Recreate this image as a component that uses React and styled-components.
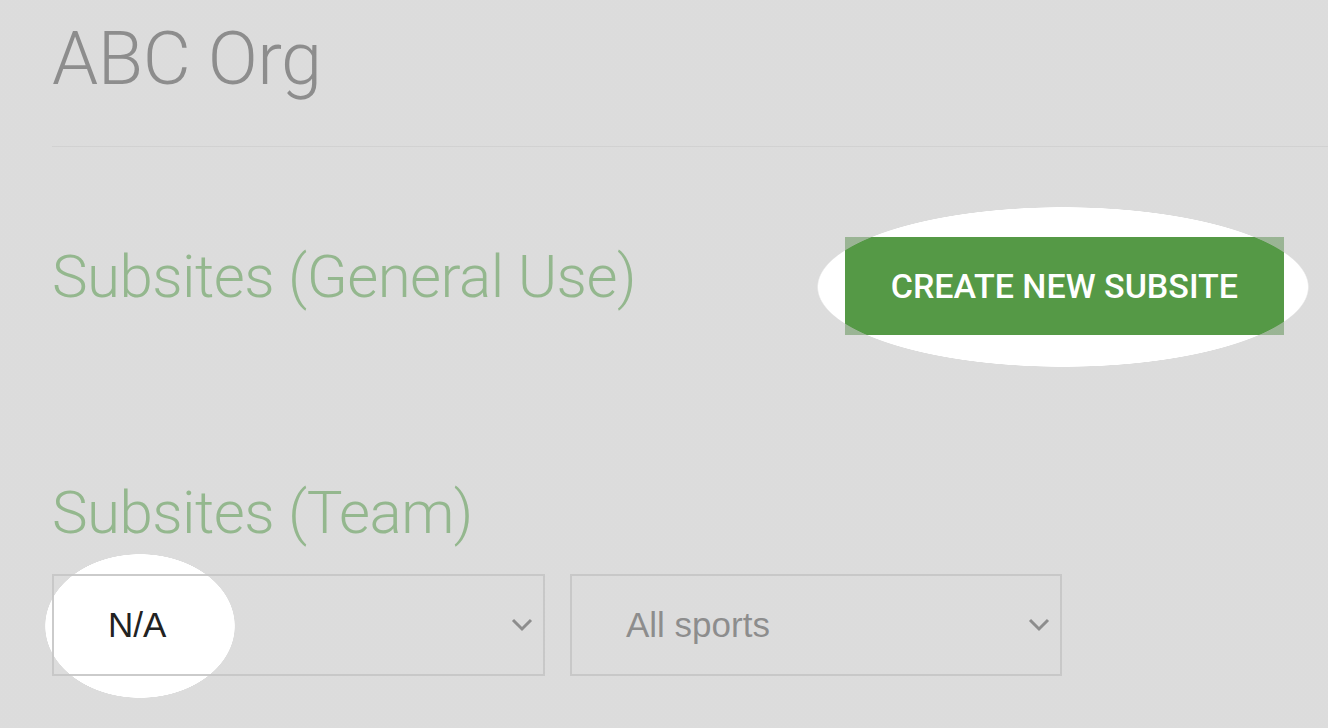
import React from "react";
import styled, { createGlobalStyle } from "styled-components";

const GlobalStyle = createGlobalStyle`
  html, body {
    margin: 0;
    padding: 0;
    background: #fff;
  }
  * {
    box-sizing: border-box;
  }
`;

const Page = styled.div`
  position: relative;
  min-height: 728px;
  overflow: hidden;
  padding-left: 52px;
  padding-top: 22px;
  background: #fff;
  font-family: Roboto, "Liberation Sans", sans-serif;
`;

const OrgTitle = styled.h1`
  margin: 0;
  font-size: 74px;
  line-height: 74px;
  font-weight: 300;
  letter-spacing: -0.5px;
  color: #333;
`;

const Divider = styled.hr`
  margin: 50px 0 0;
  border: 0;
  height: 1px;
  background: #e4e4e4;
`;

const SectionRow = styled.div`
  display: flex;
  justify-content: space-between;
  align-items: flex-start;
  padding-right: 44px;
  margin-top: ${(p) => p.$top}px;
`;

const SectionTitle = styled.h2`
  margin: ${(p) => p.$offset || 0}px 0 0;
  font-size: 60px;
  line-height: 60px;
  font-weight: 300;
  letter-spacing: -0.55px;
  color: #45a036;
`;

const PrimaryButton = styled.button`
  height: 98px;
  padding: 0 46px;
  border: 0;
  border-radius: 0;
  background: #559946;
  color: #fff;
  font-family: Roboto, "Liberation Sans", sans-serif;
  font-size: 34px;
  font-weight: 500;
  text-transform: uppercase;
  cursor: pointer;
`;

const Filters = styled.div`
  display: flex;
  gap: 25px;
  margin-top: 31px;
`;

const SelectBox = styled.div`
  width: ${(p) => p.$width}px;
  height: 102px;
  display: flex;
  align-items: center;
  justify-content: space-between;
  padding: 0 9px 0 54px;
  border: 2px solid #cbcbcb;
  font-family: "Liberation Sans", Arial, sans-serif;
  font-size: 35px;
  color: ${(p) => (p.$muted ? "#333" : "#222")};
`;

const Chevron = styled.svg`
  width: 24px;
  height: 16px;
  flex: none;
`;

const Dimmer = styled.div`
  position: absolute;
  left: 0;
  right: 0;
  top: ${(p) => p.$top}px;
  height: ${(p) => p.$height}px;
  pointer-events: none;
  background: radial-gradient(
    ellipse ${(p) => p.$rx}px ${(p) => p.$ry}px at ${(p) => p.$cx}px ${(p) => p.$cy}px,
    rgba(198, 198, 198, 0) 99.4%,
    rgba(198, 198, 198, 0.61) 100%
  );
`;

function Select({ value, width, muted }) {
  return (
    <SelectBox $width={width} $muted={muted}>
      <span>{value}</span>
      <Chevron viewBox="0 0 24 16">
        <path d="M3 3 L12 12 L21 3" fill="none" stroke="#333" strokeWidth="3" />
      </Chevron>
    </SelectBox>
  );
}

export default function App() {
  return (
    <>
      <GlobalStyle />
      <Page>
        <OrgTitle>ABC Org</OrgTitle>
        <Divider />
        <SectionRow $top={90}>
          <SectionTitle $offset={10}>Subsites (General Use)</SectionTitle>
          <PrimaryButton>Create new subsite</PrimaryButton>
        </SectionRow>
        <SectionTitle $offset={148}>Subsites (Team)</SectionTitle>
        <Filters>
          <Select value="N/A" width={493} />
          <Select value="All sports" width={492} muted />
        </Filters>
        <Dimmer $top={0} $height={460} $rx={246} $ry={80} $cx={1063} $cy={287} />
        <Dimmer $top={460} $height={268} $rx={95} $ry={72} $cx={140} $cy={166} />
      </Page>
    </>
  );
}
